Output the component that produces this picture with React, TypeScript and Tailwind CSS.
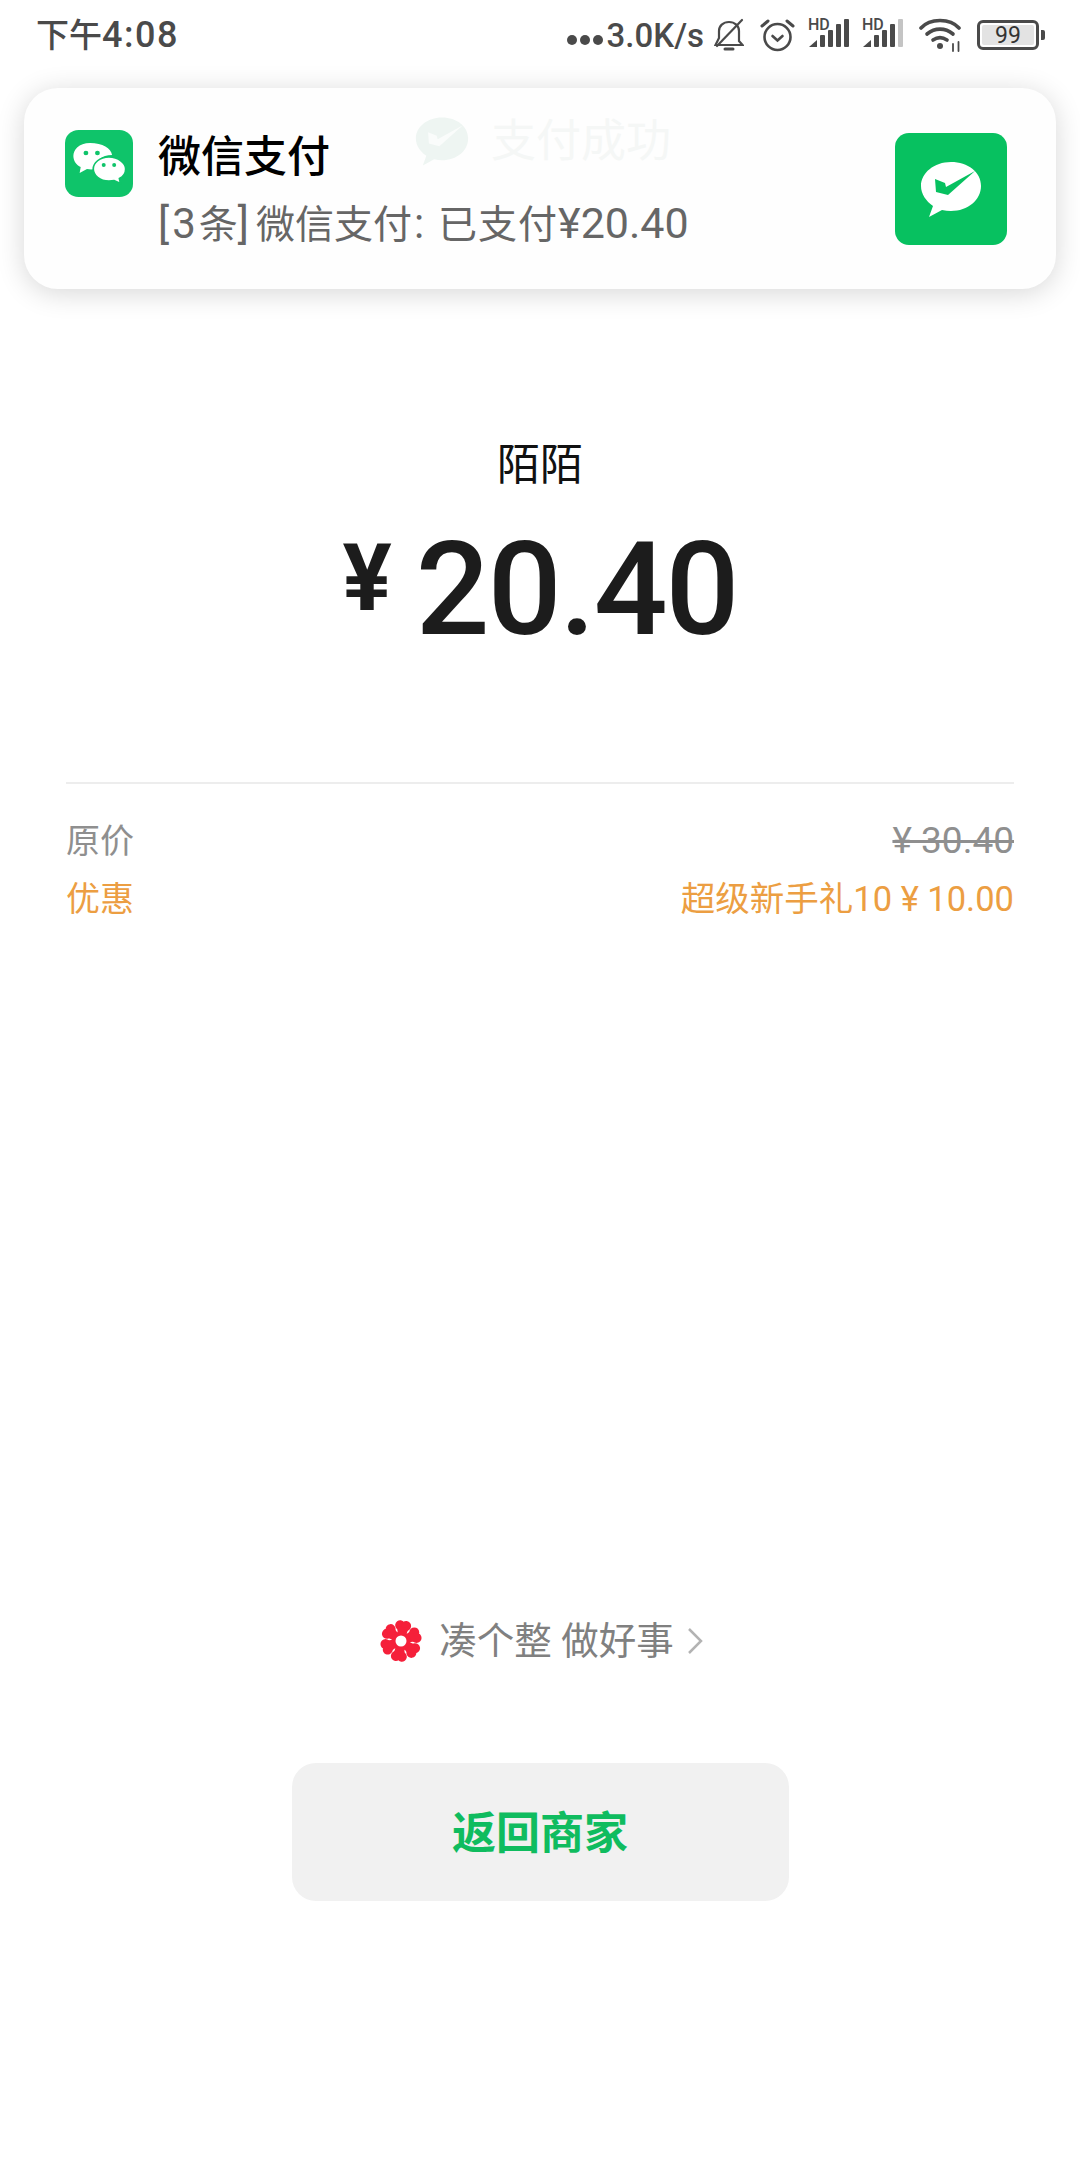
import React from "react";

const CJK = "font-['Roboto','Noto_Sans_CJK_SC',sans-serif]";

function Bell() {
  return (
    <svg width="30" height="34" viewBox="0 0 30 34" fill="none" stroke="#4a4a4a" strokeWidth="2.2" strokeLinecap="round">
      <path d="M1.500 27h27l-3.500-4V13c0-5-4-9-10-9S5 8 5 13v7l-3.500 7z" />
      <path d="M11 31h8" strokeWidth="3" />
      <path d="M3 28L28 2" />
    </svg>
  );
}

function Alarm() {
  return (
    <svg width="35" height="34" viewBox="0 0 35 34" fill="none" stroke="#4a4a4a" strokeWidth="2.600" strokeLinecap="round">
      <circle cx="17.500" cy="19" r="13" />
      <path d="M12.500 18l5 4.500 5-4.500" />
      <path d="M2 8l6-5M33 8l-6-5" strokeWidth="3" />
    </svg>
  );
}

function Signal({ last }: { last: string }) {
  return (
    <svg width="41" height="38" viewBox="0 0 41 38" fill="#4a4a4a" className="mb-[6px]">
      <text x="0" y="17" fontSize="16" fontWeight="500" fontFamily="Roboto, sans-serif">HD</text>
      <path d="M1 34l8-7v7z" />
      <rect x="12" y="22" width="5" height="12" rx="1" />
      <rect x="20" y="17" width="5" height="17" rx="1" />
      <rect x="28" y="11" width="5" height="23" rx="1" />
      <rect x="36" y="6" width="5" height="28" rx="1" fill={last} />
    </svg>
  );
}

function Wifi() {
  return (
    <svg width="43" height="36" viewBox="0 0 43 36" fill="none" stroke="#4a4a4a" strokeWidth="3.600" strokeLinecap="round">
      <path d="M2 11C11 1 31 1 40 11" />
      <path d="M8 17c8-6.500 18-6.500 26 0" />
      <path d="M14 23c4.500-3 9.500-3 14 0" />
      <circle cx="21" cy="29" r="3" fill="#4a4a4a" stroke="none" />
      <path d="M34 27v7M39.500 25v9" strokeWidth="1.800" />
    </svg>
  );
}

function Battery() {
  return (
    <div className="flex items-center gap-[2px]">
      <div className="flex h-[30px] w-[62px] items-center justify-center rounded-[6px] border-[3.5px] border-[#4a4a4a] p-[2px]">
        <div className="flex h-full w-full items-center justify-center rounded-[2px] bg-[#e3e3e3] font-['Roboto',sans-serif] text-[23px] leading-none text-[#333333]">
          99
        </div>
      </div>
      <div className="h-[10px] w-[4px] rounded-r-[2px] bg-[#4a4a4a]" />
    </div>
  );
}

function AppIcon() {
  return (
    <svg width="68" height="67" viewBox="0 0 65 67" preserveAspectRatio="none" className="ml-[1px] shrink-0">
      <rect width="65" height="67" rx="13" fill="#0fc46a" />
      <path d="M24 13c-11 0-16 7-16 13 0 5 3 9 7 11l-1 6 7-4c3 .5 5 .5 8 0 0-8 6-14 16-14-1-7-9-12-21-12z" fill="#fff" />
      <path d="M42 27c-9 0-15 6-15 12s6 12 15 12c2 0 3 0 5-.5l6 3-1-5c4-2 6-6 6-9.500 0-6-7-12-16-12z" fill="#fff" stroke="#0fc46a" strokeWidth="1.600" />
      <circle cx="20" cy="23" r="2.300" fill="#0fc46a" />
      <circle cx="31" cy="23" r="2.300" fill="#0fc46a" />
      <circle cx="37" cy="35" r="1.900" fill="#0fc46a" />
      <circle cx="47" cy="35" r="1.900" fill="#0fc46a" />
    </svg>
  );
}

function PayLogo({ color, check, size }: { color: string; check: string; size: number }) {
  return (
    <svg width={size} height={size} viewBox="0 0 62 62">
      <path d="M31 4C14 4 1 15 1 28c0 8 5 15 12 20l-4 11 13-7c3 .6 6 1 9 1 17 0 30-11 30-25S48 4 31 4z" fill={color} />
      <path d="M15 21l10 4 1 4 29-16-27 24-12-3z" fill={check} />
    </svg>
  );
}

function Flower() {
  const angles = [8, 68, 128, 188, 248, 308];
  return (
    <svg width="42" height="42" viewBox="0 0 42 42" fill="#f5203a">
      {angles.map((a) => (
        <g key={a} transform={`rotate(${a} 21 21)`}>
          <circle cx="18" cy="5.500" r="5" />
          <circle cx="24" cy="5.500" r="5" />
          <path d="M15 7h12l-3 12h-6z" />
        </g>
      ))}
      <circle cx="21" cy="21" r="9.500" />
      <circle cx="21" cy="21" r="5.500" fill="#fff" />
    </svg>
  );
}

function StatusBar() {
  return (
    <div className={`flex h-[68px] items-center justify-between pl-[36px] pr-[35px] pt-[2px] text-[#4a4a4a] ${CJK}`}>
      <span className="font-medium leading-none">
        <span className="text-[33px]">下午</span>
        <span className="text-[36px] tracking-[1.5px]">4:08</span>
      </span>
      <div className="flex items-center">
        <div className="mr-[4px] mt-[10px] flex gap-[3px]">
          <div className="h-[10px] w-[10px] rounded-full bg-[#4a4a4a]" />
          <div className="h-[10px] w-[10px] rounded-full bg-[#4a4a4a]" />
          <div className="h-[10px] w-[10px] rounded-full bg-[#4a4a4a]" />
        </div>
        <span className="mr-[10px] text-[33px] font-medium leading-none">3.0K/s</span>
        <div className="mr-[16px]"><Bell /></div>
        <div className="mr-[13px]"><Alarm /></div>
        <div className="mr-[13px]"><Signal last="#4a4a4a" /></div>
        <div className="mr-[16px]"><Signal last="#c4c4c4" /></div>
        <div className="mr-[15px]"><Wifi /></div>
        <Battery />
      </div>
    </div>
  );
}

function Notification() {
  return (
    <div className="relative z-10 mx-[24px] mt-[20px] flex h-[201px] items-start rounded-[34px] bg-[#fefefe] pl-[40px] pr-[49px] pt-[42px] shadow-[0_4px_28px_rgba(0,0,0,0.16)]">
      <AppIcon />
      <div className={`ml-[25px] flex-1 ${CJK}`}>
        <div className="text-[43px] font-medium leading-[54px] text-black">微信支付</div>
        <div className="mt-[14px] flex items-baseline text-[39px] leading-[50px] text-[#666666]">
          <span className="text-[42px] tracking-[3px]">[3</span>
          <span>条</span>
          <span className="text-[42px] tracking-[7px]">]</span>
          <span>微信支付</span>
          <span className="mr-[14px] ml-[2px] text-[42px]">:</span>
          <span className="tracking-[1px]">已支付</span>
          <span className="text-[43px]">¥20.40</span>
        </div>
      </div>
      <div className="mt-[3px] flex h-[112px] w-[112px] shrink-0 items-center justify-center rounded-[14px] bg-[#07c160]">
        <PayLogo color="#ffffff" check="#07c160" size={62} />
      </div>
      <div className={`absolute left-[391px] top-[26px] flex items-center gap-[22px] text-[45px] leading-none text-[#f5f7f6] ${CJK}`}>
        <PayLogo color="#eef5f2" check="#fafcfb" size={54} />
        <span>支付成功</span>
      </div>
    </div>
  );
}

export default function App() {
  return (
    <div className={`flex h-[2160px] w-[1080px] flex-col overflow-hidden bg-white ${CJK}`}>
      <StatusBar />
      <Notification />
      <div className="mt-[148px] flex flex-col items-center">
        <div className="text-[43px] leading-[56px] text-[#111111]">陌陌</div>
        <div className="mt-[32px] flex items-start leading-none text-[#1c1c1c]">
          <span className="mr-[24px] mt-[8px] text-[92px] font-bold leading-none">¥</span>
          <span className="text-[130px] font-medium leading-none tracking-[-2px]">20.40</span>
        </div>
      </div>
      <div className="mx-[66px] mt-[127px] h-[2px] bg-[#ededed]" />
      <div className="mx-[66px] mt-[36px] flex flex-col gap-[16px] text-[34px] leading-[42px]">
        <div className="flex justify-between text-[#8f8f8f]">
          <span>原价</span>
          <span className="text-[37px] line-through">¥ 30.40</span>
        </div>
        <div className="flex justify-between text-[#ec9e42]">
          <span>优惠</span>
          <span className="text-[34.5px]">超级新手礼10 ¥ 10.00</span>
        </div>
      </div>
      <div className="mt-[696px] flex items-center justify-center pl-[4px]">
        <Flower />
        <span className="ml-[17px] text-[37.5px] leading-[50px] text-[#808080]">凑个整 做好事</span>
        <svg width="18" height="28" viewBox="0 0 18 28" fill="none" stroke="#b3b3b3" strokeWidth="2.500" className="ml-[12px]">
          <path d="M3 2l12 12L3 26" />
        </svg>
      </div>
      <div className="mt-[97px] flex justify-center">
        <div className="flex h-[138px] w-[497px] items-center justify-center rounded-[24px] bg-[#f1f1f1] pt-[3px] text-[44px] font-bold text-[#0fbc5f]">
          返回商家
        </div>
      </div>
    </div>
  );
}
